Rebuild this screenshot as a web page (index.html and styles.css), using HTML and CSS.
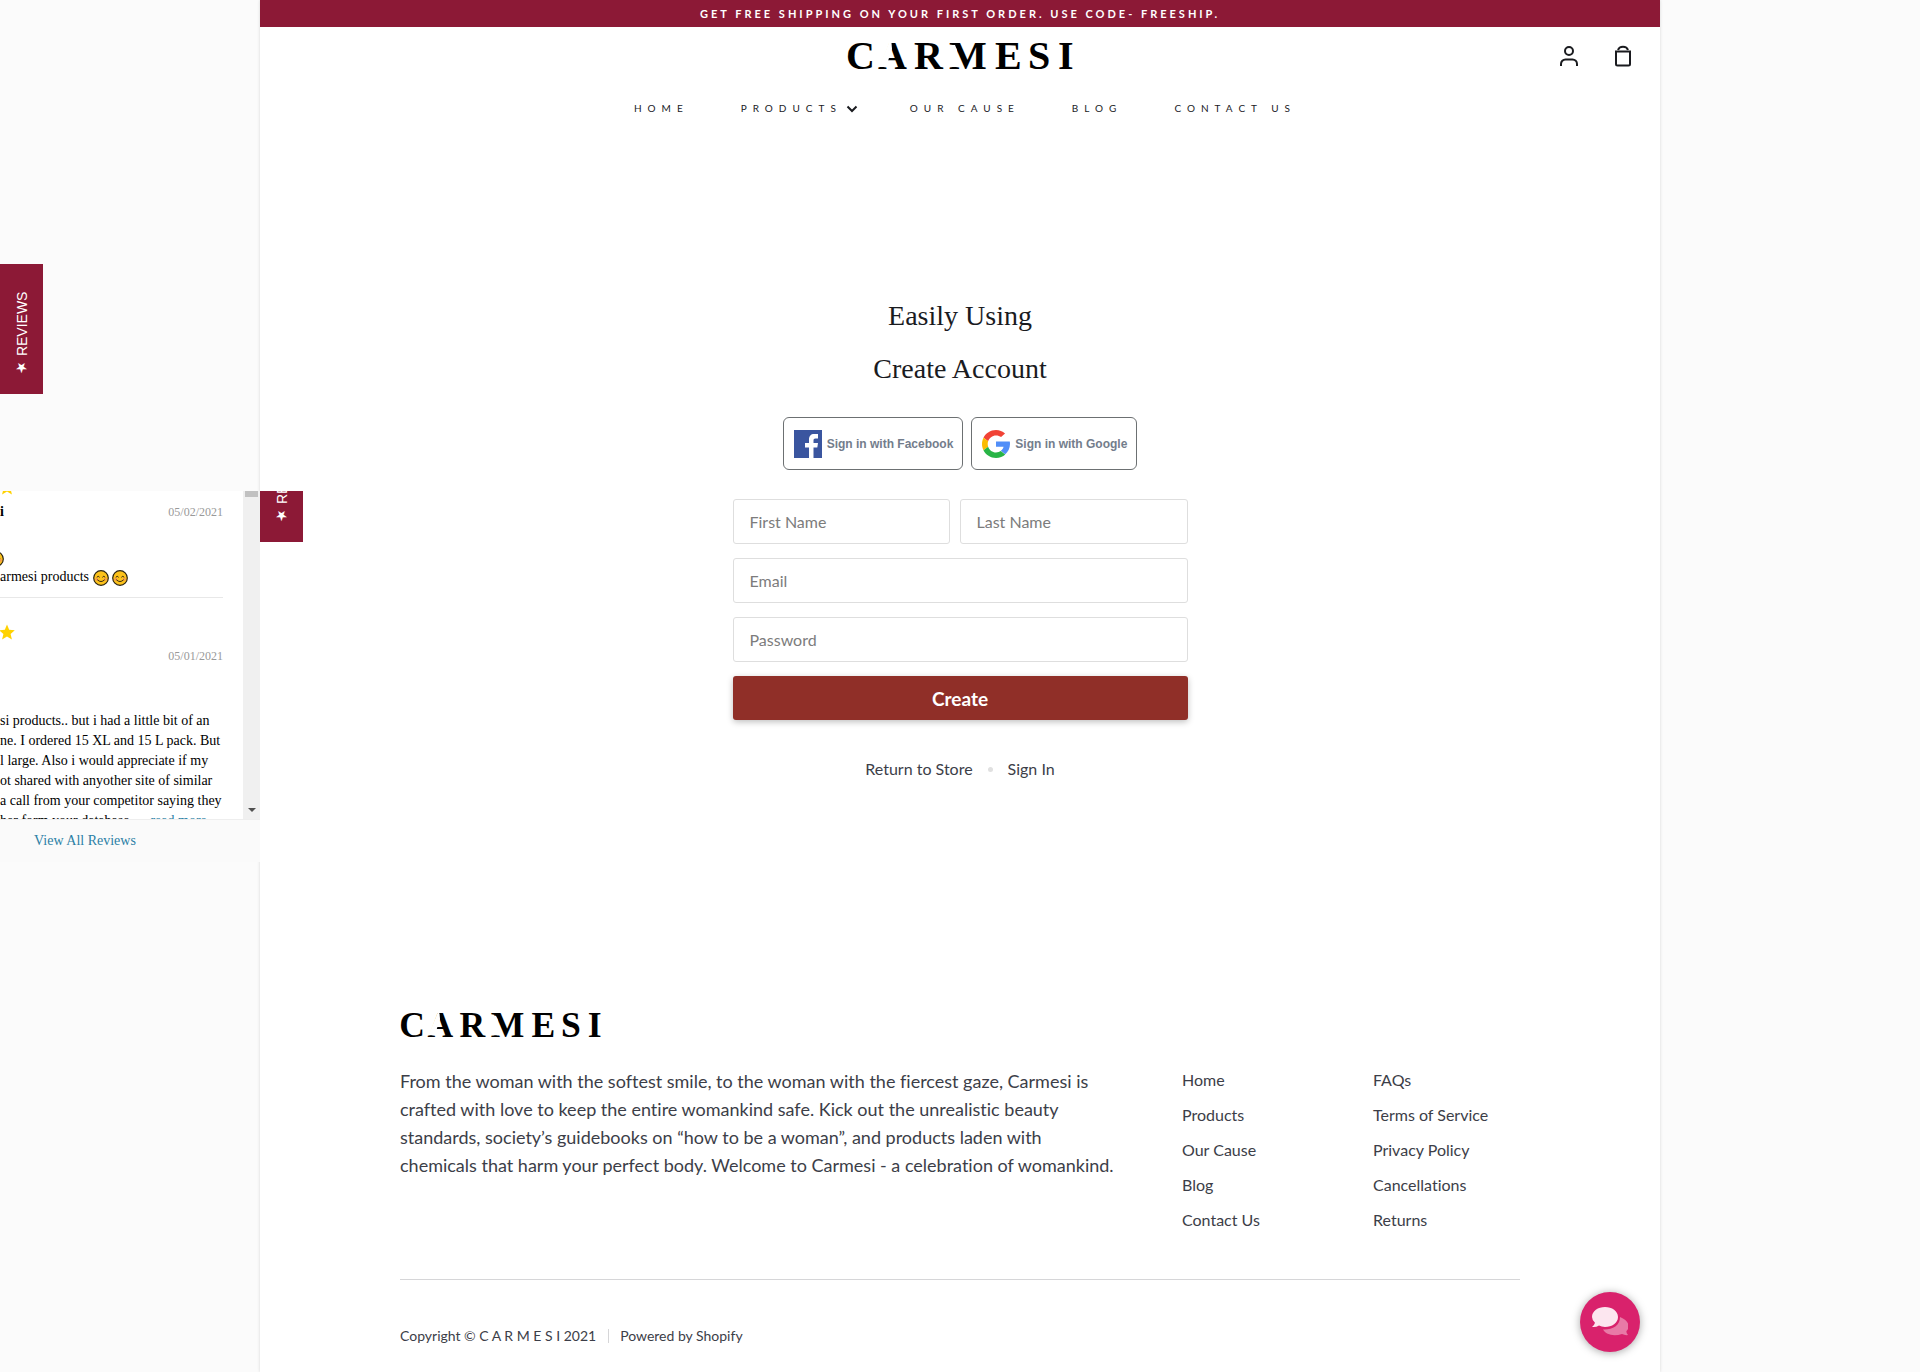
FILE: index.html
```html
<!DOCTYPE html>
<html lang="en">
<head>
<meta charset="utf-8">
<meta name="viewport" content="width=device-width, initial-scale=1">
<title>Create Account – Carmesi</title>
<link rel="stylesheet" href="styles.css">
</head>
<body>
<svg class="defs" aria-hidden="true">
  <symbol id="smile" viewBox="0 0 16 16">
    <circle cx="8" cy="8" r="7.300" fill="#fcc21b" stroke="#2b2412" stroke-width="1.200"/>
    <circle cx="3.600" cy="9.200" r="1.500" fill="#f79b4b"/><circle cx="12.400" cy="9.200" r="1.500" fill="#f79b4b"/>
    <path d="M4 7 Q5.200 5.200 6.400 7 M9.600 7 Q10.800 5.200 12 7 M4.600 10 Q8 13.400 11.400 10" fill="none" stroke="#3a2a12" stroke-linecap="round"/>
  </symbol>
  <symbol id="star" viewBox="0 0 16 16">
    <path d="M8 .5 L10.200 5.700 L15.800 6.200 L11.600 9.900 L12.900 15.400 L8 12.500 L3.100 15.400 L4.400 9.900 L.2 6.200 L5.800 5.700 Z" fill="#ffd200"/>
  </symbol>
</svg>

<div class="page">
  <p class="announcement">GET FREE SHIPPING ON YOUR FIRST ORDER. USE CODE- FREESHIP.</p>
  <header class="header">
    <div class="header-top">
      <a class="logo" href="#" aria-label="Carmesi"><svg class="logo-art" viewBox="0 0 226 29"><text class="wordmark-text" x="-1 31 67 102 148 181 211" y="28">CARMESI</text><path fill="#fff" d="M32 26 L43 -1 L44.500 2 L45 8 L42 17 L39 26 Z M104 4 H108 L110 9 V26 H104 Z"/></svg></a>
      <div class="header-icons">
        <a href="#" aria-label="Account"><svg width="20" height="22" viewBox="0 0 20 22" fill="none" stroke="#1a1b1f" stroke-width="2"><circle cx="10" cy="6" r="4"/><path d="M2 21 v-2 a4.500 4.500 0 0 1 4.500 -4.500 h7 a4.500 4.500 0 0 1 4.500 4.500 v2"/></svg></a>
        <a href="#" aria-label="Cart"><svg width="20" height="22" viewBox="0 0 20 22" fill="none" stroke="#1a1b1f" stroke-width="2"><path d="M3 6.500 h14 v12.500 a1.500 1.500 0 0 1 -1.500 1.500 h-11 a1.500 1.500 0 0 1 -1.500 -1.500 z"/><path d="M5 5 C6.500 .8 13.500 .8 15 5"/></svg></a>
      </div>
    </div>
    <nav class="nav">
      <a href="#">HOME</a>
      <a href="#">PRODUCTS<svg width="12" height="8" viewBox="0 0 12 8" fill="none" stroke="#1a1b1f" stroke-width="2"><path d="M1.500 1.500 L6 6 L10.500 1.500"/></svg></a>
      <a href="#">OUR CAUSE</a>
      <a href="#">BLOG</a>
      <a href="#">CONTACT US</a>
    </nav>
  </header>

  <main class="account">
    <h2>Easily Using</h2>
    <h2>Create Account</h2>
    <div class="social">
      <button type="button"><svg width="28" height="28" viewBox="0 0 28 28"><path fill="#3a559f" d="M0 0h28v28H0z"/><path fill="#fff" d="M15 28V17.500h-4V13h4V9.500C15 6 17 4 20 4h4v4.500h-2.500c-1.500 0-2 .7-2 2V13H24l-.7 4.500h-3.800V28z"/></svg>Sign in with Facebook</button>
      <button type="button"><svg width="28" height="28" viewBox="0 0 48 48"><path fill="#f14336" d="M24 0C14.600 0 6.500 5.400 2.560 13.220l7.980 6.190C12.400 13.700 17.700 9.500 24 9.500c3.500 0 6.400 1 8.700 2.700L39.500 5.800C35.400 2.100 30 0 24 0z"/><path fill="#518ef8" d="M48 24c0-1.600-.1-3.100-.4-4.500H24v9.020h12.940c-.58 2.960-2.260 5.480-4.780 7.180l7.730 6C44.400 37.550 48 31.500 48 24z"/><path fill="#fbbb00" d="M10.530 28.590c-.48-1.450-.76-2.990-.76-4.590s.27-3.140.76-4.590l-7.980-6.190C.92 16.460 0 20.120 0 24s.92 7.540 2.560 10.780l7.970-6.190z"/><path fill="#28b446" d="M24 48c6.480 0 11.930-2.130 15.890-5.810l-7.730-6c-2.150 1.450-4.920 2.300-8.160 2.300-6.260 0-11.570-4.220-13.470-9.910l-7.980 6.190C6.510 42.620 14.620 48 24 48z"/></svg>Sign in with Google</button>
    </div>
    <form class="form">
      <div class="names">
        <input type="text" aria-label="First Name" placeholder="First Name">
        <input type="text" aria-label="Last Name" placeholder="Last Name">
      </div>
      <input type="email" aria-label="Email" placeholder="Email">
      <input type="password" aria-label="Password" placeholder="Password">
      <button class="submit" type="submit">Create</button>
    </form>
    <p class="form-links"><a href="#">Return to Store</a><span class="dot"></span><a href="#">Sign In</a></p>
  </main>

  <footer class="footer">
    <a class="footer-logo" href="#" aria-label="Carmesi"><svg class="logo-art" viewBox="0 0 226 29"><text class="wordmark-text" x="-1 31 67 102 148 181 211" y="28">CARMESI</text><path fill="#fff" d="M32 26 L43 -1 L44.500 2 L45 8 L42 17 L39 26 Z M104 4 H108 L110 9 V26 H104 Z"/></svg></a>
    <div class="footer-main">
      <p class="about">From the woman with the softest smile, to the woman with the fiercest gaze, Carmesi is<br>crafted with love to keep the entire womankind safe. Kick out the unrealistic beauty<br>standards, society’s guidebooks on “how to be a woman”, and products laden with<br>chemicals that harm your perfect body. Welcome to Carmesi - a celebration of womankind.</p>
      <ul>
        <li><a href="#">Home</a></li><li><a href="#">Products</a></li><li><a href="#">Our Cause</a></li><li><a href="#">Blog</a></li><li><a href="#">Contact Us</a></li>
      </ul>
      <ul>
        <li><a href="#">FAQs</a></li><li><a href="#">Terms of Service</a></li><li><a href="#">Privacy Policy</a></li><li><a href="#">Cancellations</a></li><li><a href="#">Returns</a></li>
      </ul>
    </div>
    <div class="legal"><a href="#">Copyright © C A R M E S I 2021</a><a class="powered" href="#">Powered by Shopify</a></div>
  </footer>

  <button class="chat" type="button" aria-label="Chat"><svg width="36" height="30" viewBox="0 0 36 30"><path fill="#e87aa6" d="M28 10 C38 14 38 21 34.500 24 Q34 26 36 28 Q33 28.500 30 27 C22 29.500 14 28 11 22.500 C20 23 28 19 28 10 Z"/><path fill="#fce6ef" d="M13 0 C20 0 26 4 26 10 C26 16 20 20 13 20 Q9.500 20 7 18.600 Q4 20.500 0 20 Q2.500 18 3 15.800 Q0 13 0 10 C0 4 6 0 13 0 Z"/></svg></button>
</div>

<button class="reviews-tab" type="button">★ REVIEWS</button>

<aside class="reviews" aria-label="Reviews">
  <div class="reviews-panel">
    <div class="reviews-body">
      <div class="reviews-list">
        <article class="review first">
          <svg class="star" width="16" height="16"><use href="#star"/></svg>
          <div class="review-head"><b>i</b><time>05/02/2021</time></div>
          <svg class="smile-cut" width="16" height="16"><use href="#smile"/></svg>
          <p>armesi products <svg width="16" height="16"><use href="#smile"/></svg> <svg width="16" height="16"><use href="#smile"/></svg></p>
        </article>
        <article class="review second">
          <svg class="star" width="16" height="16"><use href="#star"/></svg>
          <div class="review-head"><time>05/01/2021</time></div>
          <p>si products.. but i had a little bit of an<br>ne. I ordered 15 XL and 15 L pack. But<br>l large. Also i would appreciate if my<br>ot shared with anyother site of similar<br>a call from your competitor saying they<br>her form your database....&nbsp; <a href="#">read more</a></p>
        </article>
      </div>
      <div class="scrollbar"><i class="thumb"></i><i class="arrow"></i></div>
    </div>
    <div class="reviews-foot"><a href="#">View All Reviews</a></div>
  </div>
  <div class="tab-clip"><button class="reviews-tab-inner" type="button">★ REVIEWS</button></div>
</aside>
</body>
</html>
```
FILE: styles.css
```css
* { box-sizing: border-box; }
body {
  margin: 0;
  position: relative;
  background: #fbfbfb;
  color: #3c3e48;
  font-family: Lato, "Liberation Sans", sans-serif;
  font-size: 16px;
  font-variant-ligatures: none;
}
a { color: inherit; text-decoration: none; }
p, h2, ul { margin: 0; padding: 0; }
ul { list-style: none; }
button, input { font: inherit; }
svg { flex: none; }
.defs { position: absolute; width: 0; height: 0; }

.page {
  position: relative;
  max-width: 1400px;
  margin: 0 auto;
  background: #fff;
  box-shadow: 0 0 3px rgba(0, 0, 0, .15);
}
.announcement {
  background: #8c1936;
  color: #fff;
  text-align: center;
  font-size: 11px;
  font-weight: 700;
  line-height: 27px;
  letter-spacing: 3px;
}
.header-top {
  display: grid;
  grid-template-columns: 1fr auto 1fr;
  align-items: center;
  height: 57px;
  padding: 0 27px;
}
.logo { grid-column: 2; width: 226px; height: 29px; }
.logo-art { display: block; width: 100%; height: 100%; overflow: visible; }
.wordmark-text {
  font-family: "Liberation Serif", serif;
  font-weight: 700;
  font-size: 40px;
}
.header-icons { display: flex; justify-content: flex-end; gap: 34px; }
.header-icons svg { display: block; }
.nav {
  display: flex;
  justify-content: center;
  gap: 52px;
  height: 50px;
  padding-left: 10px;
  line-height: 48px;
  font-size: 10px;
  letter-spacing: 6px;
  color: #1a1b1f;
}
.nav svg { margin-left: 4px; vertical-align: middle; }

.account {
  max-width: 455px;
  margin: 0 auto;
  padding: 155px 0 232px;
}
h2 {
  font: 400 28px/53px "Liberation Serif", serif;
  color: #1a1b1f;
  text-align: center;
}
.social {
  display: flex;
  justify-content: center;
  gap: 8px;
  margin-top: 22px;
}
.social button {
  display: flex;
  align-items: center;
  gap: 5px;
  height: 53px;
  padding: 0 9px 0 10px;
  border: 1px solid #6c7072;
  border-radius: 6px;
  background: #fff;
  color: #737d8c;
  font: 700 12px "Liberation Sans", sans-serif;
}
.form { display: grid; gap: 14px; margin-top: 29px; }
.names { display: grid; grid-template-columns: 217px 1fr; gap: 10px; }
input {
  width: 100%;
  min-width: 0;
  height: 45px;
  padding: 0 16px;
  border: 1px solid #dedede;
  border-radius: 3px;
  background: #fff;
}
input::placeholder { color: #7c7c7c; }
.submit {
  height: 44px;
  border: 0;
  border-radius: 3px;
  background: #902f28;
  color: #fff;
  font-size: 19px;
  font-weight: 700;
  box-shadow: 0 2px 6px rgba(0, 0, 0, .25);
}
.form-links {
  display: flex;
  justify-content: center;
  align-items: center;
  gap: 15px;
  margin-top: 38px;
  line-height: 22px;
}
.dot { width: 5px; height: 5px; border-radius: 50%; background: #e0e0e0; }

.footer { padding: 0 10%; }
.footer-logo { display: block; width: 201px; height: 26px; }
.footer-main {
  display: grid;
  grid-template-columns: 782px 191px 1fr;
  margin-top: 29px;
  line-height: 35px;
}
.about { font-size: 18px; line-height: 28px; }
.footer-main ul { margin-top: -5px; }
.legal {
  display: flex;
  margin-top: 42px;
  padding: 46px 0 26px;
  border-top: 1px solid #d6d6d8;
  font-size: 14px;
  line-height: 20px;
}
.powered { position: relative; margin-left: 24px; }
.powered::before {
  content: "";
  position: absolute;
  left: -12px;
  top: 3px;
  width: 1px;
  height: 14px;
  background: #d6d6d8;
}
.chat {
  position: absolute;
  right: 20px;
  bottom: 20px;
  display: grid;
  place-items: center;
  width: 60px;
  height: 60px;
  padding: 0;
  border: 0;
  border-radius: 50%;
  background: #d9226c;
  box-shadow: 0 1px 8px rgba(0, 0, 0, .35);
}

.reviews-tab, .reviews-tab-inner {
  width: 43px;
  height: 130px;
  padding: 0 0 10px;
  border: 0;
  background: #8c1936;
  color: #fff;
  font: 14px "Liberation Sans", "DejaVu Sans", sans-serif;
  writing-mode: vertical-rl;
  transform: rotate(180deg);
}
.reviews-tab { position: absolute; left: 0; top: 264px; }
.reviews {
  position: absolute;
  left: 0;
  top: 491px;
  display: flex;
  align-items: flex-start;
  font: 14px/20px "Liberation Serif", serif;
  color: #000;
}
.reviews-panel { width: 260px; background: #fff; overflow: hidden; }
.reviews-body { display: flex; height: 328px; overflow: hidden; }
.reviews-list { flex: 1; padding-right: 20px; white-space: nowrap; overflow: hidden; }
.review { position: relative; }
.review svg { vertical-align: middle; }
.review-head { display: flex; align-items: center; height: 20px; }
.review time { margin-left: auto; color: #999; font-size: 12px; }
.review .star { position: absolute; left: -1px; }
.first { height: 107px; padding-top: 11px; border-bottom: 1px solid #e8e8e8; }
.first .star { top: -12px; }
.first p { padding-top: 45px; }
.smile-cut { position: absolute; left: -12px; top: 60px; }
.second { padding-top: 48px; }
.second .star { top: 26px; }
.second p { padding-top: 45px; }
.reviews a { color: #2a7fa5; }
.scrollbar {
  display: flex;
  flex-direction: column;
  justify-content: space-between;
  align-items: center;
  width: 17px;
  padding-bottom: 7px;
  background: #f0f0f0;
}
.thumb { width: 13px; height: 6px; background: #c1c1c1; }
.arrow {
  border: 4px solid transparent;
  border-top-color: #505050;
  border-bottom: 0;
}
.reviews-foot {
  height: 43px;
  padding-right: 90px;
  border-top: 1px solid #eee;
  background: #fafafa;
  line-height: 42px;
  text-align: center;
}
.tab-clip {
  display: flex;
  align-items: flex-end;
  height: 51px;
  overflow: hidden;
}
.tab-clip button { flex: none; }
```
